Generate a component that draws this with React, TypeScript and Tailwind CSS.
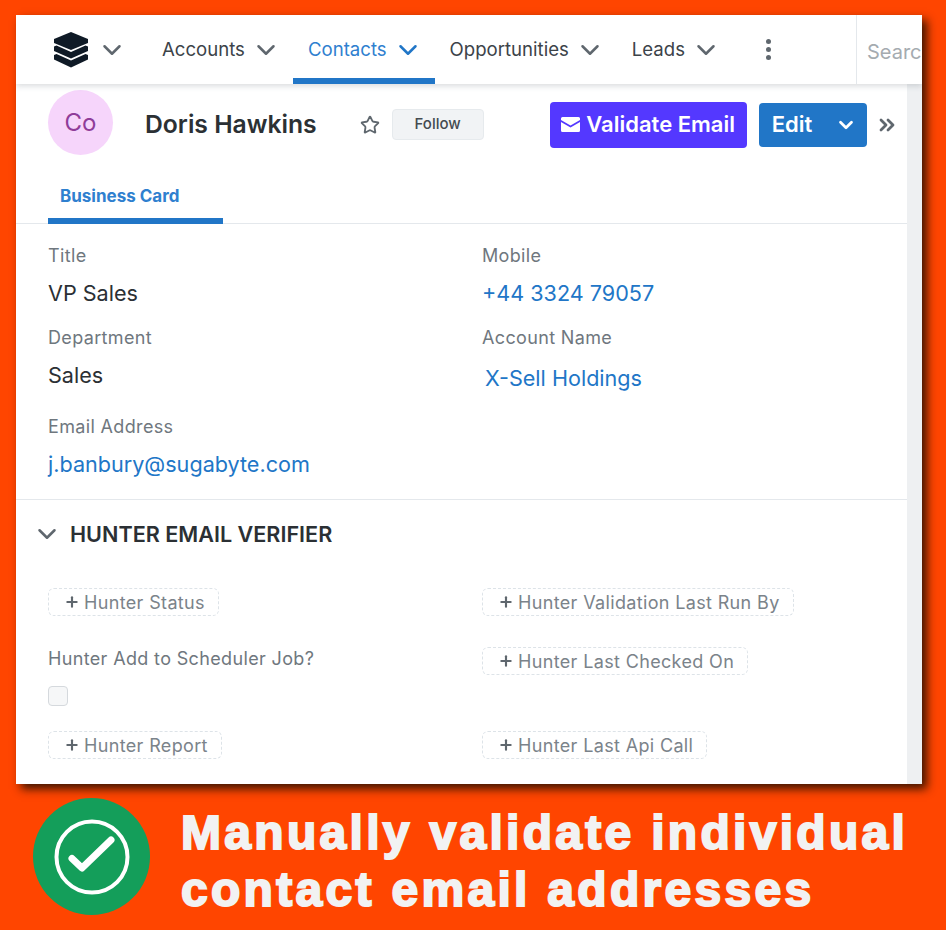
import { ChevronDown, ChevronsRight, Plus, Star } from "lucide-react";

const navItems = [
  { label: "Accounts", active: false },
  { label: "Contacts", active: true },
  { label: "Opportunities", active: false },
  { label: "Leads", active: false },
];

const StackLogo = () => (
  <svg width="36" height="36" viewBox="0 0 36 36" fill="#0f1a26">
    <path d="M18 0 L35 7 V11 L18 18 L1 11 V7 Z" />
    <path d="M1 14.5 L3.5 13.5 L18 20 L32.5 13.5 L35 14.5 V19 L18 26.5 L1 19 Z" />
    <path d="M1 23 L3.5 22 L18 28.5 L32.5 22 L35 23 V27.5 L18 35.5 L1 27.5 Z" />
  </svg>
);

const NavItem = ({ label, active }: { label: string; active: boolean }) => (
  <div
    className={`flex h-full items-center gap-[6px] pl-[15px] pr-[12px] pt-[6px] border-b-[6px] ${
      active ? "border-[#2176c7] text-[#2f80cf]" : "border-transparent text-[#3c4349]"
    }`}
  >
    <span className="text-[18.6px]">{label}</span>
    <ChevronDown size={30} strokeWidth={2} className={active ? "text-[#2176c7]" : "text-[#5f676e]"} />
  </div>
);

const Field = ({ label, value, link, indent }: { label: string; value: string; link?: boolean; indent?: boolean }) => (
  <div>
    <div className="text-[18px] leading-[24px] tracking-[0.35px] text-[#6f777e]">{label}</div>
    <div
      className={`text-[21.6px] leading-[24px] ${link ? "text-[#2176c7]" : "text-[#2b3034]"} ${
        indent ? "ml-[3px] mt-[16px]" : "mt-[13px]"
      }`}
    >
      {value}
    </div>
  </div>
);

const Chip = ({ label }: { label: string }) => (
  <div className="flex h-[28px] w-fit items-center gap-[4px] rounded-[6px] border border-dashed border-[#dde3e8] pl-[15px] pr-[13px] text-[18px] tracking-[0.35px] text-[#7b838a]">
    <Plus size={16} strokeWidth={3.2} className="text-[#5f676e]" />
    <span>{label}</span>
  </div>
);

export default function App() {
  return (
    <div className="h-[930px] w-[946px] overflow-hidden bg-[#ff4500] pl-[16px] pt-[15px] font-['Inter',sans-serif]">
      <div className="flex h-[769px] w-[906px] flex-col overflow-hidden bg-white shadow-[5px_5px_9px_rgba(40,15,0,0.9)]">
        {/* top nav */}
        <div className="relative z-10 flex h-[69px] shrink-0 items-center bg-white shadow-[0_2px_6px_rgba(60,70,80,0.2)]">
          <div className="ml-[37px] flex items-center gap-[8px] text-[#5f676e]">
            <StackLogo />
            <ChevronDown size={30} strokeWidth={2} />
          </div>
          <div className="ml-[20px] flex h-full">
            {navItems.map((item) => (
              <NavItem key={item.label} label={item.label} active={item.active} />
            ))}
          </div>
          <div className="ml-[33px] flex flex-col gap-[3px]">
            <span className="h-[5px] w-[5px] rounded-full bg-[#5f676e]" />
            <span className="h-[5px] w-[5px] rounded-full bg-[#5f676e]" />
            <span className="h-[5px] w-[5px] rounded-full bg-[#5f676e]" />
          </div>
          <div className="ml-auto flex h-full w-[66px] items-center overflow-hidden border-l border-[#e4e8ec] pl-[10px] pt-[5px] text-[20px] text-[#a5abb0]">
            Search
          </div>
        </div>

        <div className="flex min-h-0 flex-1">
          <div className="min-w-0 flex-1">
            {/* record header */}
            <div className="flex h-[70px] items-center pl-[32px] pt-[11px]">
              <div className="-mt-[5px] flex h-[65px] w-[65px] shrink-0 items-center justify-center rounded-full bg-[#f6d5fb] pt-[2px] text-[24px] text-[#8f3c99]">
                Co
              </div>
              <span className="ml-[32px] text-[24.7px] font-semibold text-[#2b3034]">Doris Hawkins</span>
              <Star size={20} strokeWidth={2.2} className="ml-[43px] text-[#5f676e]" />
              <div className="ml-[12px] flex h-[31px] w-[92px] items-center justify-center rounded-[4px] border border-[#e6eaed] bg-[#f1f3f5] text-[15px] font-medium text-[#444b51]">
                Follow
              </div>
              <div className="ml-[66px] flex h-[46px] w-[197px] items-center justify-center gap-[6px] rounded-[4px] bg-[#5438ff] text-[22px] font-semibold text-white">
                <svg width="19" height="15" viewBox="0 0 19 15" fill="white">
                  <path d="M1.5 0 H17.5 A1.5 1.5 0 0 1 19 1.5 V3 L9.5 8.5 L0 3 V1.5 A1.5 1.5 0 0 1 1.5 0 Z" />
                  <path d="M0 5 L9.5 10.5 L19 5 V13.5 A1.5 1.5 0 0 1 17.5 15 H1.5 A1.5 1.5 0 0 1 0 13.5 Z" />
                </svg>
                Validate Email
              </div>
              <div className="ml-[12px] flex h-[44px] w-[108px] items-center rounded-[4px] bg-[#2176c7] pl-[13px] pr-[10px] text-[22px] font-semibold text-white">
                <span>Edit</span>
                <ChevronDown size={22} strokeWidth={3} className="ml-auto" />
              </div>
              <ChevronsRight size={24} strokeWidth={2.8} className="ml-[8px] text-[#5f676e]" />
            </div>

            {/* tabs */}
            <div className="h-[70px] border-b border-[#e4e8ec] pl-[32px]">
              <div className="flex h-[70px] w-[175px] items-center border-b-[6px] border-[#2176c7] pl-[12px] pt-[22px] text-[17px] font-bold text-[#2f80cf]">
                Business Card
              </div>
            </div>

            {/* fields */}
            <div className="grid h-[276px] grid-cols-[434px_1fr] border-b border-[#e4e8ec] pl-[32px] pt-[20px]">
              <div className="flex flex-col">
                <Field label="Title" value="VP Sales" />
                <div className="mt-[21px]">
                  <Field label="Department" value="Sales" />
                </div>
                <div className="mt-[28px]">
                  <Field label="Email Address" value="j.banbury@sugabyte.com" link />
                </div>
              </div>
              <div className="flex flex-col">
                <Field label="Mobile" value="+44 3324 79057" link />
                <div className="mt-[21px]">
                  <Field label="Account Name" value="X-Sell Holdings" link indent />
                </div>
              </div>
            </div>

            {/* hunter section */}
            <div className="flex h-[70px] items-center gap-[8px] pb-[2px] pl-[16px] text-[21.6px] font-semibold text-[#2b3034]">
              <ChevronDown size={30} strokeWidth={2} className="text-[#5f676e]" />
              <span>HUNTER EMAIL VERIFIER</span>
            </div>
            <div className="grid grid-cols-[434px_1fr] pl-[32px] pt-[18px]">
              <div className="flex flex-col">
                <Chip label="Hunter Status" />
                <div className="mt-[31px] text-[18px] leading-[24px] tracking-[0.35px] text-[#6f777e]">
                  Hunter Add to Scheduler Job?
                </div>
                <div className="mt-[15px] h-[20px] w-[20px] rounded-[4px] border border-[#d5d9dd] bg-[#f6f7f8]" />
                <div className="mt-[25px]">
                  <Chip label="Hunter Report" />
                </div>
              </div>
              <div className="flex flex-col">
                <Chip label="Hunter Validation Last Run By" />
                <div className="mt-[31px]">
                  <Chip label="Hunter Last Checked On" />
                </div>
                <div className="mt-[56px]">
                  <Chip label="Hunter Last Api Call" />
                </div>
              </div>
            </div>
          </div>
          {/* scrollbar gutter */}
          <div className="w-[15px] shrink-0 bg-[#eef0f2]" />
        </div>
      </div>

      {/* caption */}
      <div className="ml-[17px] mt-[14px] flex items-start gap-[31px]">
        <div className="flex h-[117px] w-[117px] shrink-0 items-center justify-center rounded-full bg-[#149e5a]">
          <svg width="76" height="76" viewBox="0 0 76 76" fill="none" stroke="white">
            <circle cx="38" cy="38" r="35.5" strokeWidth="4" />
            <path d="M18 39.5 L28 49 L57 21" strokeWidth="7" strokeLinecap="round" strokeLinejoin="round" />
          </svg>
        </div>
        <div className="mt-[6px] font-['Liberation_Sans',sans-serif] text-[48px] font-bold leading-[57px] tracking-[3.3px] whitespace-nowrap text-[#f2f2f2] [-webkit-text-stroke:2px_#f2f2f2]">
          <div>Manually validate individual</div>
          <div>contact email addresses</div>
        </div>
      </div>
    </div>
  );
}
